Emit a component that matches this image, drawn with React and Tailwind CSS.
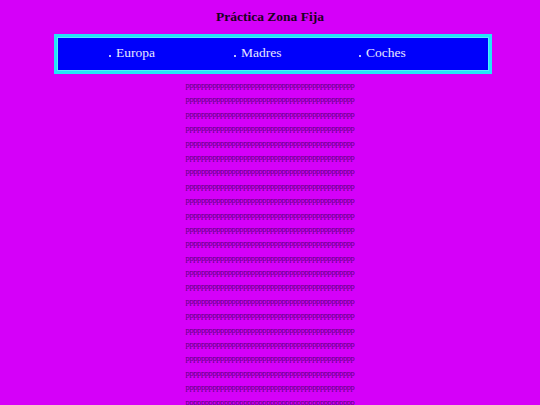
import React from 'react'

const NAV = ['Europa', 'Madres', 'Coches']
const LINE = 'p'.repeat(44)
const ROWS = Array.from({ length: 23 }, (_, i) => i)

export default function App() {
  return (
    <div className="min-h-[405px] w-[540px] overflow-hidden bg-[#d500f9] font-['Liberation_Serif',serif]">
      <h1 className="pt-[8px] text-center text-[13.5px] font-bold leading-[18px] text-[#1a0020]">
        Práctica Zona Fija
      </h1>

      {/* ── Menu box ── */}
      <div className="ml-[54px] mr-[48px] mt-[8px] h-[40px] border-[3px] border-[#22e6f7] bg-[#0000fb] shadow-[inset_0_0_0_1px_#4ef0ff]">
        <ul className="flex pl-[52px] pt-[6px]">
          {NAV.map(item => (
            <li key={item} className="flex w-[125px] items-center text-[13.5px] leading-[20px] text-[#e8e8ff]">
              <span className="mr-[5px] mt-[5px] h-[2px] w-[2px] rounded-full bg-white" />
              {item}
            </li>
          ))}
        </ul>
      </div>

      {/* ── Filler text ── */}
      <div className="mt-[7px] flex flex-col items-center">
        {ROWS.map(i => (
          <div key={i} className="h-[14.4px] text-[8.4px] leading-[10px] tracking-[-0.35px] text-[#5a007c]">
            {LINE}
          </div>
        ))}
      </div>
    </div>
  )
}
